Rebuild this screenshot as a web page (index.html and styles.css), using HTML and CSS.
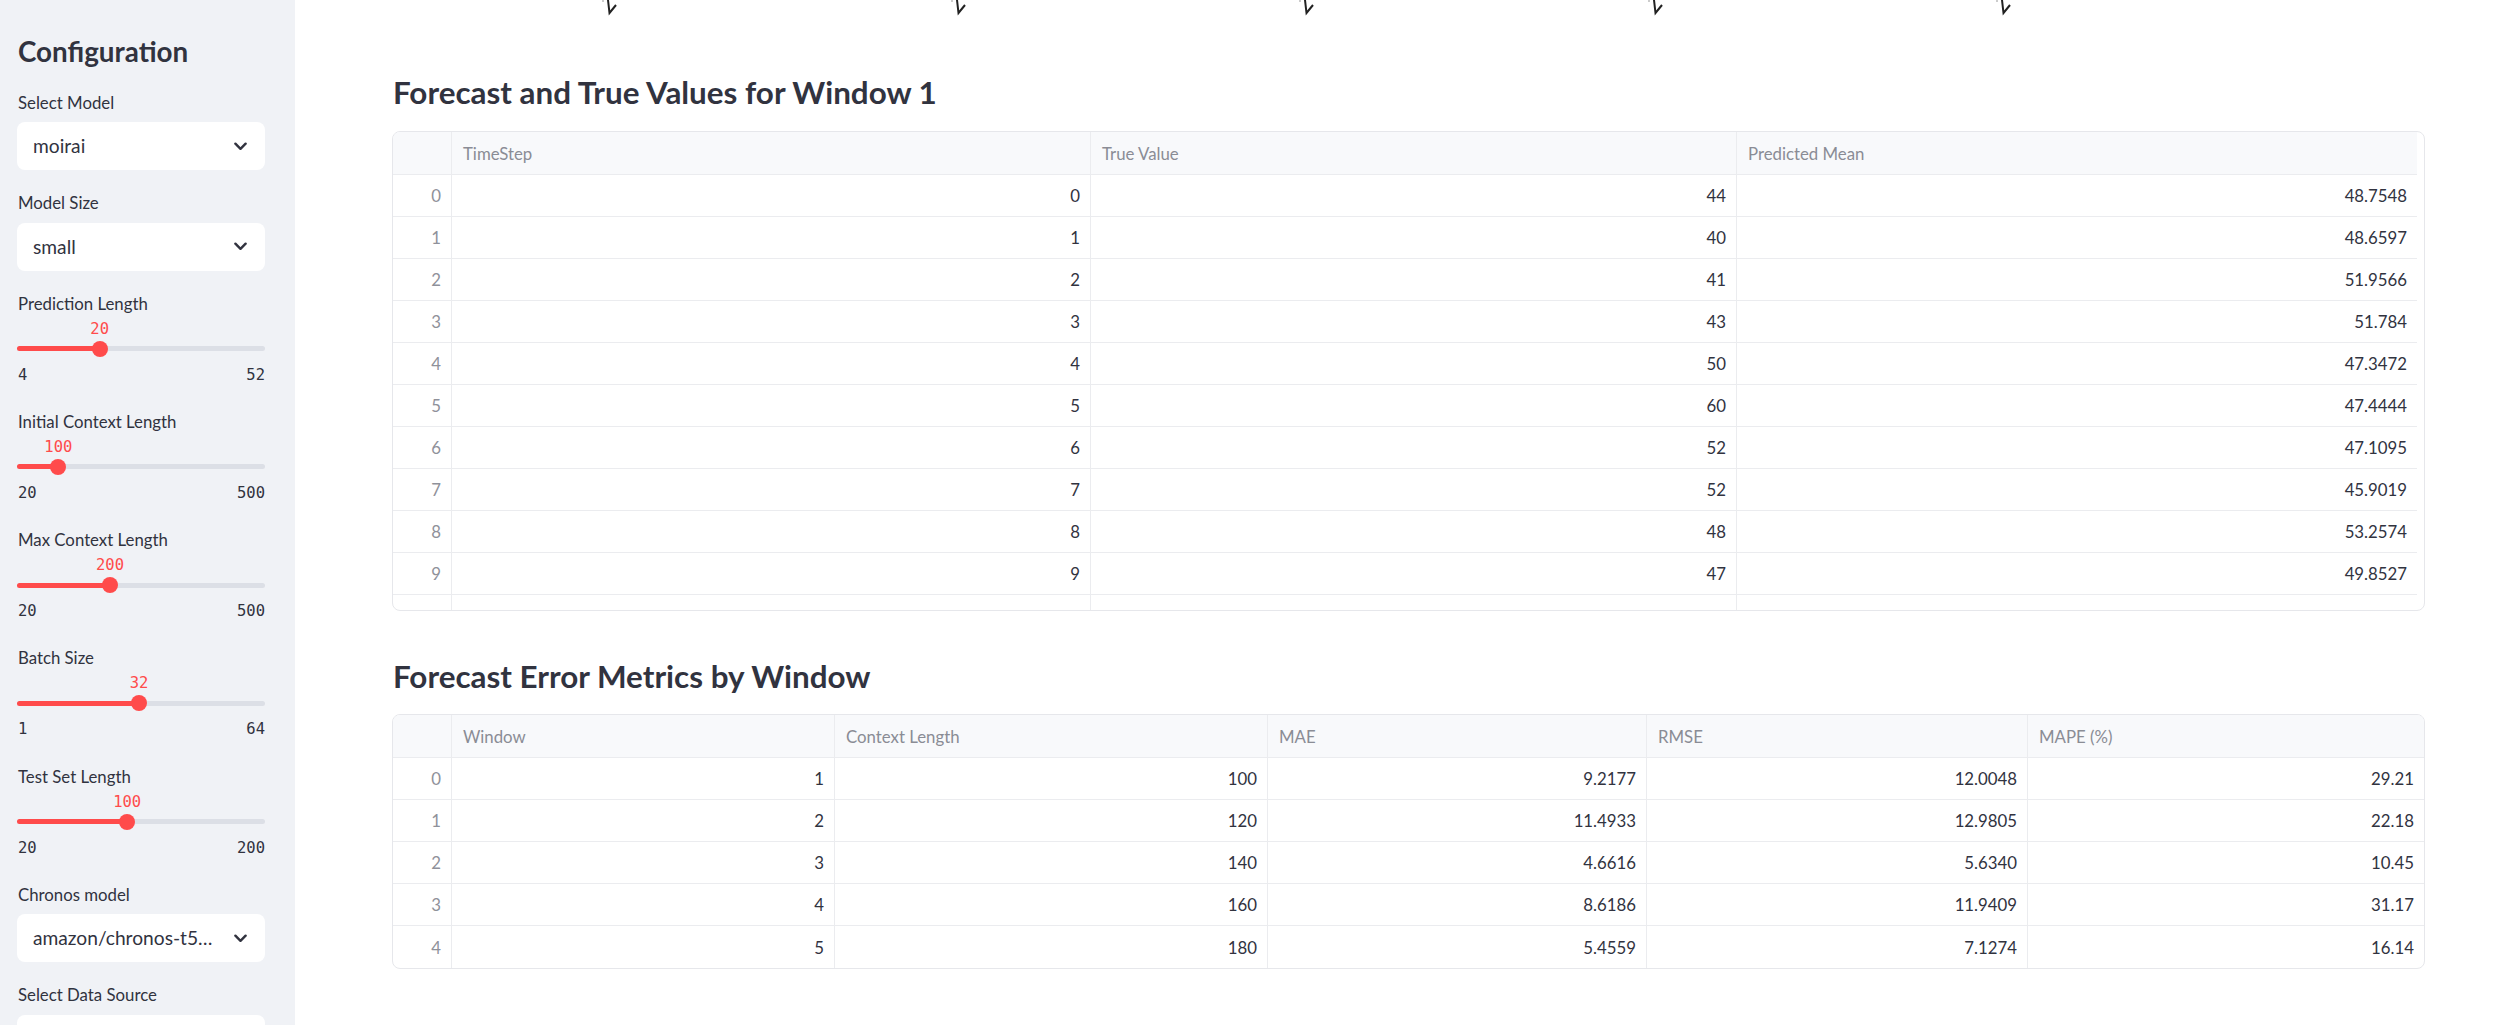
FILE: index.html
```html
<!DOCTYPE html>
<html lang="en">
<head>
<meta charset="utf-8">
<title>Forecast</title>
<link rel="stylesheet" href="styles.css">
</head>
<body>
<aside class="sidebar">
  <h2 class="side-title">Configuration</h2>

  <div class="widget">
    <div class="label">Select Model</div>
    <div class="select"><span class="select-text">moirai</span><svg class="chev" viewBox="0 0 14 9"><polyline points="1.5,1.5 7,7 12.5,1.5"/></svg></div>
  </div>

  <div class="widget">
    <div class="label">Model Size</div>
    <div class="select"><span class="select-text">small</span><svg class="chev" viewBox="0 0 14 9"><polyline points="1.5,1.5 7,7 12.5,1.5"/></svg></div>
  </div>

  <div class="widget slider">
    <div class="label">Prediction Length</div>
    <div class="value-row"><span class="value" style="left:33.33%">20</span></div>
    <div class="track"><div class="rail"></div><div class="fill" style="width:33.33%"></div><div class="thumb" style="left:33.33%"></div></div>
    <div class="minmax"><span>4</span><span>52</span></div>
  </div>

  <div class="widget slider">
    <div class="label">Initial Context Length</div>
    <div class="value-row"><span class="value" style="left:16.67%">100</span></div>
    <div class="track"><div class="rail"></div><div class="fill" style="width:16.67%"></div><div class="thumb" style="left:16.67%"></div></div>
    <div class="minmax"><span>20</span><span>500</span></div>
  </div>

  <div class="widget slider">
    <div class="label">Max Context Length</div>
    <div class="value-row"><span class="value" style="left:37.5%">200</span></div>
    <div class="track"><div class="rail"></div><div class="fill" style="width:37.5%"></div><div class="thumb" style="left:37.5%"></div></div>
    <div class="minmax"><span>20</span><span>500</span></div>
  </div>

  <div class="widget slider">
    <div class="label">Batch Size</div>
    <div class="value-row"><span class="value" style="left:49.21%">32</span></div>
    <div class="track"><div class="rail"></div><div class="fill" style="width:49.21%"></div><div class="thumb" style="left:49.21%"></div></div>
    <div class="minmax"><span>1</span><span>64</span></div>
  </div>

  <div class="widget slider">
    <div class="label">Test Set Length</div>
    <div class="value-row"><span class="value" style="left:44.44%">100</span></div>
    <div class="track"><div class="rail"></div><div class="fill" style="width:44.44%"></div><div class="thumb" style="left:44.44%"></div></div>
    <div class="minmax"><span>20</span><span>200</span></div>
  </div>

  <div class="widget">
    <div class="label">Chronos model</div>
    <div class="select"><span class="select-text">amazon/chronos-t5…</span><svg class="chev" viewBox="0 0 14 9"><polyline points="1.5,1.5 7,7 12.5,1.5"/></svg></div>
  </div>

  <div class="widget">
    <div class="label">Select Data Source</div>
    <div class="select"><span class="select-text"></span></div>
  </div>
</aside>

<main class="main">
  <div class="chart-tail">
    <svg class="tick" viewBox="0 0 24 16"><circle cx="1" cy="1" r="1" fill="#bbb"/><polyline points="6,0 7.5,13 14,5"/></svg>
    <svg class="tick" viewBox="0 0 24 16"><circle cx="1" cy="1" r="1" fill="#bbb"/><polyline points="6,0 7.5,13 14,5"/></svg>
    <svg class="tick" viewBox="0 0 24 16"><circle cx="1" cy="1" r="1" fill="#bbb"/><polyline points="6,0 7.5,13 14,5"/></svg>
    <svg class="tick" viewBox="0 0 24 16"><circle cx="1" cy="1" r="1" fill="#bbb"/><polyline points="6,0 7.5,13 14,5"/></svg>
    <svg class="tick" viewBox="0 0 24 16"><circle cx="1" cy="1" r="1" fill="#bbb"/><polyline points="6,0 7.5,13 14,5"/></svg>
  </div>

  <h3 class="heading first">Forecast and True Values for Window 1</h3>
  <div class="table t1">
    <div class="row head"><div class="cell idx"></div><div class="cell">TimeStep</div><div class="cell">True Value</div><div class="cell last">Predicted Mean</div></div>
    <div class="row"><div class="cell idx">0</div><div class="cell num">0</div><div class="cell num">44</div><div class="cell num last">48.7548</div></div>
    <div class="row"><div class="cell idx">1</div><div class="cell num">1</div><div class="cell num">40</div><div class="cell num last">48.6597</div></div>
    <div class="row"><div class="cell idx">2</div><div class="cell num">2</div><div class="cell num">41</div><div class="cell num last">51.9566</div></div>
    <div class="row"><div class="cell idx">3</div><div class="cell num">3</div><div class="cell num">43</div><div class="cell num last">51.784</div></div>
    <div class="row"><div class="cell idx">4</div><div class="cell num">4</div><div class="cell num">50</div><div class="cell num last">47.3472</div></div>
    <div class="row"><div class="cell idx">5</div><div class="cell num">5</div><div class="cell num">60</div><div class="cell num last">47.4444</div></div>
    <div class="row"><div class="cell idx">6</div><div class="cell num">6</div><div class="cell num">52</div><div class="cell num last">47.1095</div></div>
    <div class="row"><div class="cell idx">7</div><div class="cell num">7</div><div class="cell num">52</div><div class="cell num last">45.9019</div></div>
    <div class="row"><div class="cell idx">8</div><div class="cell num">8</div><div class="cell num">48</div><div class="cell num last">53.2574</div></div>
    <div class="row"><div class="cell idx">9</div><div class="cell num">9</div><div class="cell num">47</div><div class="cell num last">49.8527</div></div>
    <div class="row"><div class="cell idx"></div><div class="cell num"></div><div class="cell num"></div><div class="cell num last"></div></div>
  </div>

  <h3 class="heading second">Forecast Error Metrics by Window</h3>
  <div class="table t2">
    <div class="row head"><div class="cell idx"></div><div class="cell">Window</div><div class="cell">Context Length</div><div class="cell">MAE</div><div class="cell">RMSE</div><div class="cell last">MAPE (%)</div></div>
    <div class="row"><div class="cell idx">0</div><div class="cell num">1</div><div class="cell num">100</div><div class="cell num">9.2177</div><div class="cell num">12.0048</div><div class="cell num last">29.21</div></div>
    <div class="row"><div class="cell idx">1</div><div class="cell num">2</div><div class="cell num">120</div><div class="cell num">11.4933</div><div class="cell num">12.9805</div><div class="cell num last">22.18</div></div>
    <div class="row"><div class="cell idx">2</div><div class="cell num">3</div><div class="cell num">140</div><div class="cell num">4.6616</div><div class="cell num">5.6340</div><div class="cell num last">10.45</div></div>
    <div class="row"><div class="cell idx">3</div><div class="cell num">4</div><div class="cell num">160</div><div class="cell num">8.6186</div><div class="cell num">11.9409</div><div class="cell num last">31.17</div></div>
    <div class="row lastrow"><div class="cell idx">4</div><div class="cell num">5</div><div class="cell num">180</div><div class="cell num">5.4559</div><div class="cell num">7.1274</div><div class="cell num last">16.14</div></div>
  </div>
</main>
</body>
</html>
```

FILE: styles.css
```css
* { box-sizing: border-box; }

html, body {
  margin: 0;
  height: 100%;
}

body {
  display: flex;
  overflow: hidden;
  font-family: Lato, "Noto Sans", sans-serif;
  color: #31333f;
  background: #ffffff;
}

/* ---------- sidebar ---------- */
.sidebar {
  flex: 0 0 295px;
  width: 295px;
  height: 100vh;
  background: #f0f2f6;
  padding: 28px 30px 0 17px;
  display: flex;
  flex-direction: column;
  overflow: hidden;
}

.side-title {
  margin: 0 0 14.5px 1px;
  font-size: 27.8px;
  line-height: 48px;
  font-weight: 700;
  color: #31333f;
}

.widget {
  margin-bottom: 21px;
  flex: 0 0 auto;
}

.widget.slider {
  margin-bottom: 25.3px;
}

.label {
  font-size: 16.8px;
  line-height: 24px;
  margin: 0 0 7.5px 1px;
  color: #31333f;
}

.slider .label {
  margin-bottom: 0;
}

.select {
  height: 48px;
  background: #ffffff;
  border-radius: 8px;
  display: flex;
  align-items: center;
  justify-content: space-between;
  padding: 0 18px 0 16px;
}

.select-text {
  font-size: 19.2px;
  line-height: 24px;
  white-space: nowrap;
  overflow: hidden;
  color: #31333f;
}

.chev {
  width: 13px;
  height: 9px;
  flex: 0 0 auto;
}

.chev polyline {
  fill: none;
  stroke: #31333f;
  stroke-width: 2.6;
  stroke-linecap: round;
  stroke-linejoin: round;
}

.value-row {
  position: relative;
  height: 20px;
  margin-top: 3px;
}

.value {
  position: absolute;
  top: 0;
  transform: translateX(-50%);
  font-family: "DejaVu Sans Mono", "Liberation Mono", monospace;
  font-size: 15.5px;
  line-height: 20px;
  color: #ff4b4b;
}

.track {
  position: relative;
  height: 16px;
  margin-top: 2px;
}

.rail, .fill {
  position: absolute;
  left: 0;
  top: 5.5px;
  height: 5px;
  border-radius: 3px;
}

.rail {
  right: 0;
  background: #dcdfe6;
}

.fill {
  background: #ff4b4b;
}

.thumb {
  position: absolute;
  top: 0;
  width: 16px;
  height: 16px;
  border-radius: 50%;
  background: #ff4b4b;
  transform: translateX(-50%);
}

.minmax {
  display: flex;
  justify-content: space-between;
  margin-top: 8px;
  font-family: "DejaVu Sans Mono", "Liberation Mono", monospace;
  font-size: 15.5px;
  line-height: 20px;
  color: #31333f;
  padding-left: 1px;
}

/* ---------- main ---------- */
.main {
  flex: 1 1 auto;
  height: 100vh;
  overflow: hidden;
  padding: 0 80px 0 97px;
}

.chart-tail {
  height: 20px;
  display: flex;
  gap: 324.5px;
  padding-left: 210px;
}

.tick {
  width: 24px;
  height: 16px;
  flex: 0 0 auto;
}

.tick polyline {
  fill: none;
  stroke: #222222;
  stroke-width: 2;
  stroke-linejoin: miter;
}

.heading {
  margin: 0;
  font-size: 31.4px;
  line-height: 40px;
  font-weight: 700;
  color: #31333f;
  padding-left: 1px;
}

.heading.first { margin-top: 52px; }
.heading.second { margin-top: 45px; }

.table {
  margin-top: 19px;
  border: 1px solid #e6e7eb;
  border-radius: 8px;
  overflow: hidden;
  background: #ffffff;
}

.t1 {
  height: 480px;
  padding-right: 7px;
}

.t2 { margin-top: 18px; }

.row {
  display: grid;
  height: 42px;
}

.row.head {
  height: 43px;
  background: #f8f9fb;
}

.t1 .row { grid-template-columns: 59px 639px 646px 1fr; }
.t2 .row { grid-template-columns: 59px 383px 433px 379px 381px 1fr; }

.cell {
  border-right: 1px solid #ebecef;
  border-bottom: 1px solid #ebecef;
  padding: 0 10px;
  display: flex;
  align-items: center;
  font-size: 16.8px;
  white-space: nowrap;
  overflow: hidden;
  color: #31333f;
}

.cell.last { border-right: none; }
.lastrow .cell { border-bottom: none; }

.head .cell {
  color: #8a8c95;
  padding-left: 11px;
}

.cell.num { justify-content: flex-end; }

.cell.idx {
  justify-content: flex-end;
  color: #8f919a;
}
```
